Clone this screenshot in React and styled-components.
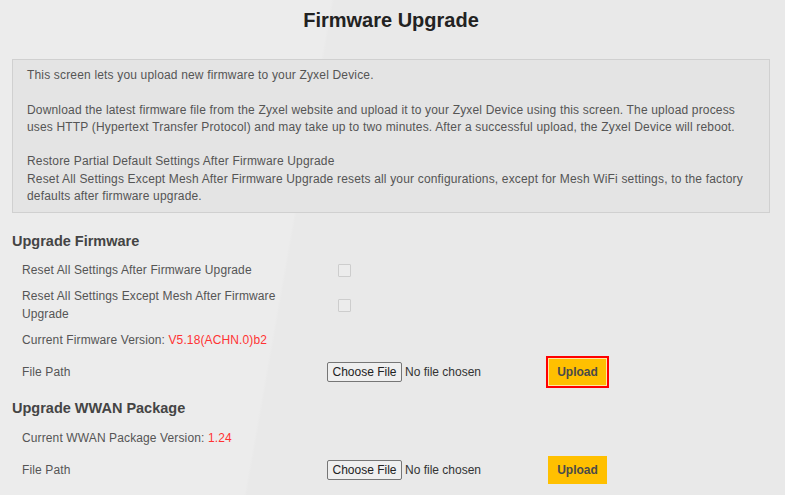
import React from "react";
import styled, { createGlobalStyle } from "styled-components";

const GlobalStyle = createGlobalStyle`
  html, body {
    margin: 0;
    padding: 0;
  }
  body {
    width: 785px;
    height: 495px;
    overflow: hidden;
    font-family: "Liberation Sans", Arial, sans-serif;
    background: linear-gradient(
      100deg,
      #ececec 0%,
      #ececec 38%,
      #e9e9e9 38.3%,
      #e9e9e9 100%
    );
  }
`;

export default function App() {
  return (
    <>
      <GlobalStyle />
      <Page>
        <Title>Firmware Upgrade</Title>
        <InfoBox>
          This screen lets you upload new firmware to your Zyxel Device.
          <br />
          <br />
          Download the latest firmware file from the Zyxel website and upload
          it to your Zyxel Device using this screen. The upload process uses
          HTTP (Hypertext Transfer Protocol) and may take up to two minutes.
          After a successful upload, the Zyxel Device will reboot.
          <br />
          <br />
          Restore Partial Default Settings After Firmware Upgrade
          <br />
          Reset All Settings Except Mesh After Firmware Upgrade resets all your
          configurations, except for Mesh WiFi settings, to the factory
          defaults after firmware upgrade.
        </InfoBox>

        <SectionTitle>Upgrade Firmware</SectionTitle>
        <Rows>
          <Row>
            <Label>Reset All Settings After Firmware Upgrade</Label>
            <Checkbox type="checkbox" />
          </Row>
          <Row $tall>
            <Label>Reset All Settings Except Mesh After Firmware Upgrade</Label>
            <Checkbox type="checkbox" />
          </Row>
          <Row>
            <Label $wide>
              Current Firmware Version: <Value>V5.18(ACHN.0)b2</Value>
            </Label>
          </Row>
          <Row>
            <Label>File Path</Label>
            <FilePicker />
            <UploadButton $focused>Upload</UploadButton>
          </Row>
        </Rows>

        <SectionTitle $second>Upgrade WWAN Package</SectionTitle>
        <Rows $loose>
          <Row>
            <Label $wide>
              Current WWAN Package Version: <Value>1.24</Value>
            </Label>
          </Row>
          <Row>
            <Label>File Path</Label>
            <FilePicker />
            <UploadButton>Upload</UploadButton>
          </Row>
        </Rows>
      </Page>
    </>
  );
}

function FilePicker() {
  return (
    <FileField>
      <HiddenInput type="file" />
      <ChooseButton>Choose File</ChooseButton>
      <FileName>No file chosen</FileName>
    </FileField>
  );
}

const Page = styled.div`
  padding: 0 15px 0 12px;
`;

const Title = styled.h1`
  margin: 0;
  height: 40px;
  line-height: 40px;
  text-align: center;
  font-size: 20px;
  font-weight: bold;
  color: #222;
`;

const InfoBox = styled.div`
  margin-top: 19px;
  padding: 7px 14px 7px 14px;
  background: #e4e4e4;
  border: 1px solid #d0d0d0;
  font-size: 12px;
  line-height: 17.3px;
  letter-spacing: 0.17px;
  color: #555;
`;

const SectionTitle = styled.h2`
  margin: ${(p) => (p.$second ? "11px" : "18px")} 0 0 0;
  height: 20px;
  line-height: 20px;
  font-size: 14.5px;
  font-weight: bold;
  color: #444;
`;

const Rows = styled.div`
  display: flex;
  flex-direction: column;
  gap: 2px;
  padding-left: 10px;
  margin-top: ${(p) => (p.$loose ? "5px" : "4px")};
`;

const Row = styled.div`
  display: grid;
  grid-template-columns: 305px 221px auto;
  align-items: center;
  min-height: ${(p) => (p.$tall ? "36px" : "30px")};
`;

const Label = styled.div`
  grid-column: ${(p) => (p.$wide ? "1 / 4" : "1")};
  font-size: 12px;
  line-height: 18px;
  letter-spacing: 0.12px;
  color: #555;
  padding-right: ${(p) => (p.$wide ? "0" : "40px")};
`;

const Value = styled.span`
  color: #f33;
`;

const Checkbox = styled.input`
  appearance: none;
  margin: 0 0 0 11px;
  width: 13px;
  height: 13px;
  border: 1px solid #cdcdcd;
  border-radius: 1px;
  background: #ececec;
  box-sizing: border-box;
`;

const FileField = styled.label`
  display: flex;
  align-items: center;
  gap: 3px;
  font-size: 12px;
`;

const HiddenInput = styled.input`
  display: none;
`;

const ChooseButton = styled.span`
  display: inline-flex;
  align-items: center;
  justify-content: center;
  width: 75px;
  height: 20px;
  box-sizing: border-box;
  border: 1px solid #767676;
  border-radius: 2px;
  background: #efefef;
  color: #222;
`;

const FileName = styled.span`
  color: #333;
`;

const UploadButton = styled.button`
  justify-self: start;
  width: 59px;
  height: 28px;
  padding: 0;
  border: none;
  background: #ffc000;
  color: #4a4a4a;
  font-family: inherit;
  font-size: 12px;
  font-weight: bold;
  outline: ${(p) => (p.$focused ? "2px solid #f00" : "none")};
  outline-offset: 0;
  box-shadow: ${(p) => (p.$focused ? "inset 0 0 0 1px #ffe9a0" : "none")};
`;
